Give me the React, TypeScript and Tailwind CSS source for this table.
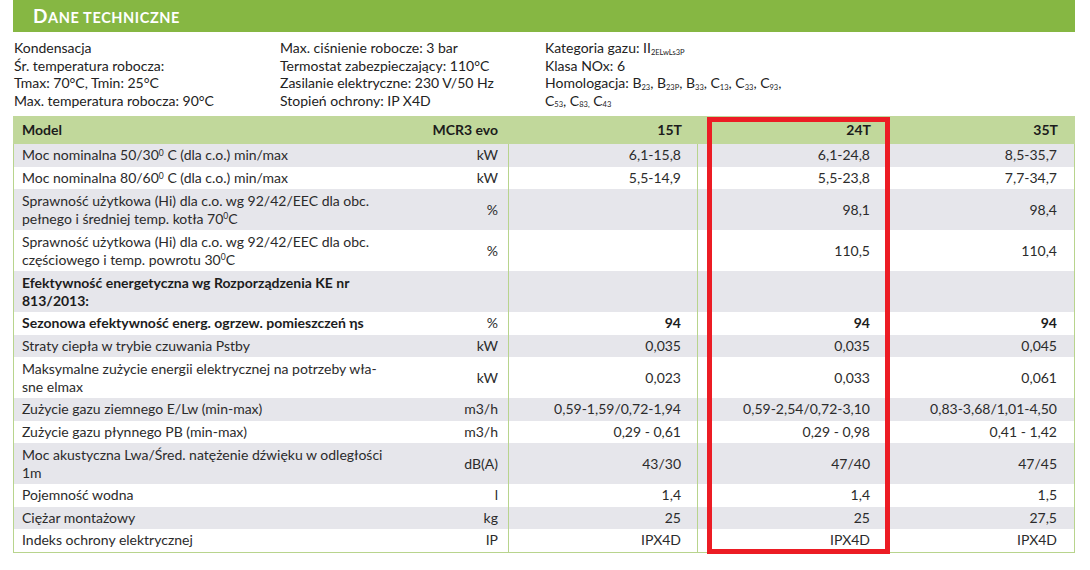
import React from "react";

type Row = {
  label: React.ReactNode;
  unit: string;
  v: string[];
  bold?: boolean;
  boldVals?: boolean;
  tall?: boolean;
};

const S = ({ children }: { children: React.ReactNode }) => (
  <sup className="text-[8.5px]">{children}</sup>
);
const B = ({ children }: { children: React.ReactNode }) => (
  <sub className="text-[7.5px]">{children}</sub>
);

const rows: Row[] = [
  { label: <>Moc nominalna 50/30<S>0</S> C (dla c.o.) min/max</>, unit: "kW", v: ["6,1-15,8", "6,1-24,8", "8,5-35,7"] },
  { label: <>Moc nominalna 80/60<S>0</S> C (dla c.o.) min/max</>, unit: "kW", v: ["5,5-14,9", "5,5-23,8", "7,7-34,7"] },
  {
    label: <>Sprawność użytkowa (Hi) dla c.o. wg 92/42/EEC dla obc.<br />pełnego i średniej temp. kotła 70<S>0</S>C</>,
    unit: "%",
    v: ["", "98,1", "98,4"],
    tall: true,
  },
  {
    label: <>Sprawność użytkowa (Hi) dla c.o. wg 92/42/EEC dla obc.<br />częściowego i temp. powrotu 30<S>0</S>C</>,
    unit: "%",
    v: ["", "110,5", "110,4"],
    tall: true,
  },
  {
    label: <>Efektywność energetyczna wg Rozporządzenia KE nr<br />813/2013:</>,
    unit: "",
    v: ["", "", ""],
    bold: true,
    tall: true,
  },
  { label: <>Sezonowa efektywność energ. ogrzew. pomieszczeń ηs</>, unit: "%", v: ["94", "94", "94"], bold: true, boldVals: true },
  { label: <>Straty ciepła w trybie czuwania Pstby</>, unit: "kW", v: ["0,035", "0,035", "0,045"] },
  {
    label: <>Maksymalne zużycie energii elektrycznej na potrzeby wła-<br />sne elmax</>,
    unit: "kW",
    v: ["0,023", "0,033", "0,061"],
    tall: true,
  },
  { label: <>Zużycie gazu ziemnego E/Lw (min-max)</>, unit: "m3/h", v: ["0,59-1,59/0,72-1,94", "0,59-2,54/0,72-3,10", "0,83-3,68/1,01-4,50"] },
  { label: <>Zużycie gazu płynnego PB (min-max)</>, unit: "m3/h", v: ["0,29 - 0,61", "0,29 - 0,98", "0,41 - 1,42"] },
  {
    label: <>Moc akustyczna Lwa/Śred. natężenie dźwięku w odległości<br />1m</>,
    unit: "dB(A)",
    v: ["43/30", "47/40", "47/45"],
    tall: true,
  },
  { label: <>Pojemność wodna</>, unit: "l", v: ["1,4", "1,4", "1,5"] },
  { label: <>Ciężar montażowy</>, unit: "kg", v: ["25", "25", "27,5"] },
  { label: <>Indeks ochrony elektrycznej</>, unit: "IP", v: ["IPX4D", "IPX4D", "IPX4D"] },
];

export default function App() {
  return (
    <div
      className="w-[1090px] h-[570px] bg-white pl-[13px] text-[#2b2b2b]"
      style={{ fontFamily: "Lato, 'Open Sans', sans-serif" }}
    >
      {/* Title bar */}
      <div className="w-[1062px] h-[32px] bg-[#86b743] flex items-center pl-[20px] pt-[1px]">
        <span className="text-white font-bold tracking-[0.6px]">
          <span className="text-[19px]">D</span>
          <span className="text-[14.5px]">ANE TECHNICZNE</span>
        </span>
      </div>

      {/* Info */}
      <div className="grid grid-cols-[266px_265px_1fr] pl-[1px] pt-[7px] h-[84px] text-[14px] leading-[17.5px] text-[#222]">
        <div>
          <div>Kondensacja</div>
          <div>Śr. temperatura robocza:</div>
          <div>Tmax: 70°C, Tmin: 25°C</div>
          <div>Max. temperatura robocza: 90°C</div>
        </div>
        <div>
          <div>Max. ciśnienie robocze: 3 bar</div>
          <div>Termostat zabezpieczający: 110°C</div>
          <div>Zasilanie elektryczne: 230 V/50 Hz</div>
          <div>Stopień ochrony: IP X4D</div>
        </div>
        <div>
          <div>
            Kategoria gazu: II<B>2ELwLs3P</B>
          </div>
          <div>Klasa NOx: 6</div>
          <div>
            Homologacja: B<B>23</B>, B<B>23P</B>, B<B>33</B>, C<B>13</B>, C<B>33</B>, C<B>93</B>,
          </div>
          <div>
            C<B>53</B>, C<B>83,</B> C<B>43</B>
          </div>
        </div>
      </div>

      {/* Table */}
      <div className="relative w-[1062px] text-[14px] leading-[18px]">
        <div className="grid grid-cols-[496px_189px_189px_188px] h-[28px] bg-[#c1d89b] font-bold text-[#1c1c1c] items-center">
          <div className="flex justify-between pl-[9px] pr-[11px]">
            <span>Model</span>
            <span>MCR3 evo</span>
          </div>
          <div className="text-right pr-[16px]">15T</div>
          <div className="text-right pr-[16px]">24T</div>
          <div className="text-right pr-[17px]">35T</div>
        </div>
        <div className="border-l border-r border-b border-[#b8d48d]">
          {rows.map((r, i) => (
            <div
              key={i}
              className={`grid grid-cols-[495px_189px_189px_187px] ${
                r.tall ? "h-[41px]" : "h-[22.5px]"
              } ${i % 2 === 0 ? "bg-[#e6e6eb]" : "bg-white"}`}
            >
              <div className="flex items-center justify-between pl-[8px] pr-[10px] border-r border-[#b8d48d]">
                <span className={r.bold ? "font-bold text-[#1c1c1c]" : ""}>{r.label}</span>
                <span>{r.unit}</span>
              </div>
              <div
                className={`flex items-center justify-end pr-[16px] border-r border-[#b8d48d] ${
                  r.boldVals ? "font-bold text-[#1c1c1c]" : ""
                }`}
              >
                {r.v[0]}
              </div>
              <div
                className={`flex items-center justify-end pr-[16px] border-r border-[#b8d48d] ${
                  r.boldVals ? "font-bold text-[#1c1c1c]" : ""
                }`}
              >
                {r.v[1]}
              </div>
              <div
                className={`flex items-center justify-end pr-[17px] ${
                  r.boldVals ? "font-bold text-[#1c1c1c]" : ""
                }`}
              >
                {r.v[2]}
              </div>
            </div>
          ))}
        </div>
        {/* Highlight box */}
        <div className="absolute left-[694px] top-[1px] w-[183px] h-[437px] border-[5px] border-[#ec1c24]" />
      </div>
    </div>
  );
}
